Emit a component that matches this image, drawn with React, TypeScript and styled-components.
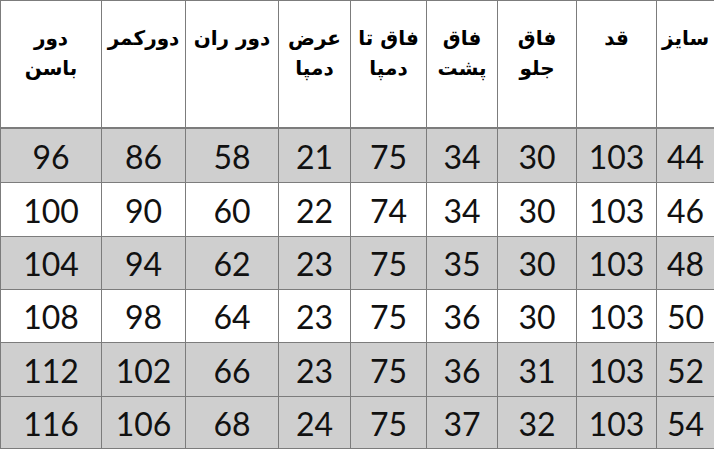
import styled, { createGlobalStyle } from 'styled-components'

const GlobalStyle = createGlobalStyle`
	html, body {
		margin: 0;
		padding: 0;
		background: #ffffff;
	}
`

const LINE_COLOR = '#7c7c7c'
const SHADE_COLOR = '#cfcfcf'

// widths listed right to left, as the sheet reads
const COLUMNS = '57px 79px 78px 70px 75px 71px 92px 83px 100px'

const HEADERS: string[][] = [
	['سایز'],
	['قد'],
	['فاق', 'جلو'],
	['فاق', 'پشت'],
	['فاق تا', 'دمپا'],
	['عرض', 'دمپا'],
	['دور ران'],
	['دورکمر'],
	['دور', 'باسن']
]

const ROWS = [
	{ height: 53, shaded: true, values: [44, 103, 30, 34, 75, 21, 58, 86, 96] },
	{ height: 53, shaded: false, values: [46, 103, 30, 34, 74, 22, 60, 90, 100] },
	{ height: 52, shaded: true, values: [48, 103, 30, 35, 75, 23, 62, 94, 104] },
	{ height: 52, shaded: false, values: [50, 103, 30, 36, 75, 23, 64, 98, 108] },
	{ height: 53, shaded: true, values: [52, 103, 31, 36, 75, 23, 66, 102, 112] },
	{ height: 51, shaded: true, values: [54, 103, 32, 37, 75, 24, 68, 106, 116] }
]

const Sheet = styled.div`
	width: 714px;
	height: 449px;
	overflow: hidden;
	display: flex;
	flex-direction: column;
	gap: 1px;
	padding-top: 1px;
	box-sizing: border-box;
	background-color: ${LINE_COLOR};
`

const Row = styled.div<{ $height: number }>`
	direction: rtl;
	display: grid;
	grid-template-columns: ${COLUMNS};
	column-gap: 1px;
	height: ${(props) => props.$height}px;
	flex: none;
`

const HeaderRow = styled(Row)`
	margin-bottom: 1px;
`

const HeaderCell = styled.div`
	background-color: #ffffff;
	display: flex;
	flex-direction: column;
	align-items: center;
	padding-top: 22px;
	font-family: 'DejaVu Sans', 'Noto Sans', sans-serif;
	font-weight: bold;
	font-size: 20px;
	line-height: 30px;
	color: #000000;
	white-space: nowrap;
`

const Cell = styled.div<{ $shaded: boolean }>`
	background-color: ${(props) => (props.$shaded ? SHADE_COLOR : '#ffffff')};
	display: flex;
	align-items: center;
	justify-content: center;
	padding-top: 1px;
	font-family: Lato, 'Open Sans', sans-serif;
	font-size: 32px;
	color: #111111;
`

export default function App() {
	return (
		<>
			<GlobalStyle />
			<Sheet>
				<HeaderRow $height={126}>
					{HEADERS.map((lines, index) => (
						<HeaderCell key={index}>
							{lines.map((line) => (
								<span key={line}>{line}</span>
							))}
						</HeaderCell>
					))}
				</HeaderRow>
				{ROWS.map((row) => (
					<Row key={row.values[0]} $height={row.height}>
						{row.values.map((value, index) => (
							<Cell key={index} $shaded={row.shaded}>
								{value}
							</Cell>
						))}
					</Row>
				))}
			</Sheet>
		</>
	)
}
